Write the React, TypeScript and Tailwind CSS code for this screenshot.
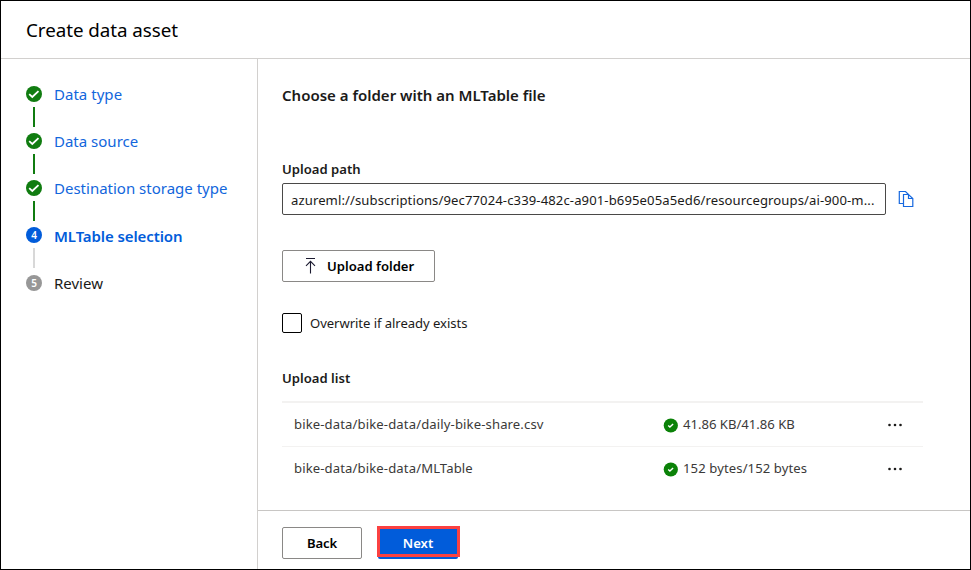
import React from "react";

const steps = [
  { label: "Data type", state: "done", track: "tracking-[0.03px]" },
  { label: "Data source", state: "done", track: "tracking-normal" },
  { label: "Destination storage type", state: "done", track: "tracking-normal" },
  { label: "MLTable selection", state: "current", track: "tracking-[-0.1px] pt-px" },
  { label: "Review", state: "todo", track: "tracking-normal" },
];

const files = [
  { name: "bike-data/bike-data/daily-bike-share.csv", size: "41.86 KB/41.86 KB", track: "tracking-normal", row: "h-11 border-b border-[#f3f2f1]" },
  { name: "bike-data/bike-data/MLTable", size: "152 bytes/152 bytes", track: "tracking-[0.1px]", row: "h-[43px]" },
];

function StepIcon({ state, index }: { state: string; index: number }) {
  if (state === "done") {
    return (
      <svg width="16" height="16" viewBox="0 0 16 16" className="block">
        <circle cx="8" cy="8" r="8" fill="#107c10" />
        <path d="M3.2 8.1l3.1 2.9 6.2-5.9" fill="none" stroke="#fff" strokeWidth="1.8" />
      </svg>
    );
  }
  return (
    <div
      className={`flex size-4 items-center justify-center rounded-full text-[10px] leading-none font-semibold text-white ${
        state === "current" ? "bg-[#015cda]" : "bg-[#979797]"
      }`}
    >
      {index + 1}
    </div>
  );
}

function Check() {
  return (
    <svg width="15" height="15" viewBox="0 0 15 15" className="mt-px -ml-px block shrink-0">
      <circle cx="7.8" cy="7.5" r="7.1" fill="#0b8208" />
      <path d="M5.2 7.5l1.7 1.5 3.2-3" fill="none" stroke="#fff" strokeWidth="1.4" />
    </svg>
  );
}

export default function App() {
  return (
    <div className="flex h-[570px] w-[971px] flex-col overflow-hidden border border-black bg-white font-['Noto_Sans','Open_Sans',sans-serif] text-[13.1px] leading-5 text-[#1b1a19]">
      <header className="flex h-[58px] shrink-0 items-center border-b border-[#d2d0ce] pl-[25px]">
        <h1 className="text-[18.8px] leading-7 tracking-[-0.05px] text-black">Create data asset</h1>
      </header>
      <div className="flex min-h-0 grow">
        <nav className="w-[257px] shrink-0 border-r border-[#d2d0ce] pt-[27px] pl-[25px]">
          {steps.map((s, i) => (
            <div key={s.label} className="flex h-[47.15px]">
              <div className="flex w-4 flex-col items-center">
                <StepIcon state={s.state} index={i} />
                {i < 4 && (
                  <div
                    className={`mt-[5px] h-5 w-0.5 ${s.state === "done" ? "bg-[#107c10]" : "bg-[#d8d8d8]"}`}
                  />
                )}
              </div>
              <div
                className={`ml-3 h-4 text-[15px] leading-[17px] whitespace-nowrap ${s.track} ${
                  s.state === "current"
                    ? "font-semibold text-[#015cda]"
                    : s.state === "done"
                      ? "text-[#1266dc]"
                      : "text-[#1b1a19]"
                }`}
              >
                {s.label}
              </div>
            </div>
          ))}
        </nav>
        <div className="flex min-w-0 grow flex-col">
          <main className="flex grow flex-col pt-[25px] pl-6">
            <h2 className="text-[15px] leading-[22px] font-semibold">Choose a folder with an MLTable file</h2>
            <div className="mt-[53px] font-semibold">Upload path</div>
            <div className="mt-1 flex items-center">
              <div className="flex h-8 w-[604px] items-center rounded-[2px] border border-[#4a4948] pt-0.5 pl-2 tracking-[0.1px] whitespace-nowrap">
                azureml://subscriptions/9ec77024-c339-482c-a901-b695e05a5ed6/resourcegroups/ai-900-m...
              </div>
              <svg width="16" height="18" viewBox="0 0 16 18" className="ml-3 block" fill="none" stroke="#1668df" strokeWidth="1.2">
                <path d="M5 13.500H1.300V1.500H7.500l3 3" />
                <path d="M5.500 4.500h5l4.300 4v8H5.500z" />
                <path d="M10.500 4.500v4h4.300" />
              </svg>
            </div>
            <button className="mt-[35px] flex h-8 w-[153px] items-center rounded-[2px] border border-[#8a8886] pl-[22px] font-semibold text-black">
              <svg width="12" height="16" viewBox="0 0 12 16" className="block" fill="none" stroke="#1b1a30" strokeWidth="1.1">
                <path d="M1 .5h9M5.500 15.500v-12M1 7.800l4.500-4.500L10 7.800" />
              </svg>
              <span className="ml-2.5">Upload folder</span>
            </button>
            <div className="mt-[31px] flex items-center">
              <div className="size-5 rounded-[2px] border border-black" />
              <span className="ml-2 tracking-[-0.06px]">Overwrite if already exists</span>
            </div>
            <div className="mt-[35px] font-semibold">Upload list</div>
            <div className="mt-[13px] w-[641px] border-t-2 border-[#f3f2f1] text-[#3b3a39]">
              {files.map((f) => (
                <div key={f.name} className={`flex items-center pl-3 ${f.row}`}>
                  <div className="-mt-px w-[370px] tracking-[0.12px]">{f.name}</div>
                  <Check />
                  <div className={`-mt-px ml-[5px] w-[205px] ${f.track}`}>{f.size}</div>
                  <svg width="14" height="4" viewBox="0 0 14 4" className="block" fill="#1b1a19">
                    <circle cx="1.5" cy="2" r="1.3" />
                    <circle cx="7" cy="2" r="1.3" />
                    <circle cx="12.5" cy="2" r="1.3" />
                  </svg>
                </div>
              ))}
            </div>
          </main>
          <footer className="flex h-[59px] shrink-0 border-t border-[#c8c6c4] pt-4 pl-6">
            <button className="h-8 w-20 rounded-[2px] border border-[#8a8886] font-semibold tracking-[-0.1px] text-black">Back</button>
            <div className="relative ml-4 h-8 w-20">
              <button className="h-8 w-20 rounded-[2px] bg-[#015cda] font-semibold text-white">Next</button>
              <div className="pointer-events-none absolute -top-px -left-px h-[31px] w-[83px] border-3 border-[#fb4141]" />
            </div>
          </footer>
        </div>
      </div>
    </div>
  );
}
